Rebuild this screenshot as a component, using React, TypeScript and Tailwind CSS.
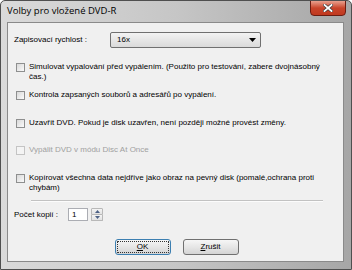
import React from "react";

const body = { fontFamily: '"Liberation Sans", Arial, sans-serif' };

function Check({ disabled }: { disabled?: boolean }) {
  return (
    <div
      className={
        "w-[9px] h-[9px] shrink-0 border " +
        (disabled
          ? "border-[#c4c4c4] bg-[#f4f4f4]"
          : "border-[#8e8f8f] bg-gradient-to-br from-[#d8d8d8] to-[#fbfbfb]")
      }
    />
  );
}

function Btn({ children, def }: { children: React.ReactNode; def?: boolean }) {
  return (
    <div
      className={
        "w-[56px] h-[16px] rounded-[3px] border flex items-center justify-center bg-gradient-to-b from-[#f6f6f6] via-[#e6e6e6] to-[#d4d4d4] " +
        (def ? "border-[#3c7fb1] p-[1px]" : "border-[#707070]")
      }
    >
      {def ? (
        <div className="w-full h-full border border-dotted border-[#333] rounded-[1px] flex items-center justify-center text-[8px] text-black">
          {children}
        </div>
      ) : (
        <span className="text-[8px] text-black">{children}</span>
      )}
    </div>
  );
}

export default function App() {
  return (
    <div
      className="w-[352px] h-[270px] flex flex-col border border-[#4f4f4f] rounded-t-[5px] bg-gradient-to-r from-[#dadada] via-[#c6c6c6] to-[#a6a6a6] overflow-hidden"
      style={body}
    >
      {/* title bar */}
      <div className="h-[21px] shrink-0 flex items-start justify-between pl-[6px] pr-[5px]">
        <span
          className="text-[9.5px] text-black mt-[4px] leading-[12px]"
          style={{ fontFamily: '"Open Sans", "Noto Sans", sans-serif' }}
        >
          Volby pro vložené DVD-R
        </span>
        <div className="w-[36px] h-[16px] -mt-[1px] rounded-b-[4px] border border-[#6b1d12] bg-gradient-to-b from-[#e8a08e] via-[#c8442a] to-[#c0391f] flex items-center justify-center">
          <svg width="10" height="8" viewBox="0 0 10 8">
            <path d="M1.5 1 L8.5 7 M8.5 1 L1.5 7" stroke="#3a3a3a" strokeWidth="3.2" strokeLinecap="square" />
            <path d="M1.5 1 L8.5 7 M8.5 1 L1.5 7" stroke="#ffffff" strokeWidth="1.8" strokeLinecap="square" />
          </svg>
        </div>
      </div>

      {/* client */}
      <div className="flex-1 ml-[6px] mr-[7px] mb-[7px] border border-[#8a8a8a] bg-[#f0f0f0] flex flex-col pt-[9px] text-[8px] text-black leading-[10px]">
        {/* speed row */}
        <div className="h-[16px] flex items-center pl-[6px]">
          <span className="w-[96px]">Zapisovací rychlost :</span>
          <div className="w-[151px] h-[16px] rounded-[2px] border border-[#707070] bg-gradient-to-b from-[#f3f3f3] to-[#dadada] flex items-center justify-between pl-[6px] pr-[4px]">
            <span>16x</span>
            <svg width="7" height="4" viewBox="0 0 7 4">
              <polygon points="0,0 7,0 3.5,4" fill="#000" />
            </svg>
          </div>
        </div>

        {/* row 1 */}
        <div className="mt-[14px] flex items-start pl-[8px] gap-[4px]">
          <div className="mt-[0.5px]"><Check /></div>
          <span className="w-[310px]">
            Simulovat vypalování před vypálením. (Použito pro testování, zabere dvojnásobný čas.)
          </span>
        </div>

        {/* row 2 */}
        <div className="mt-[8px] flex items-start pl-[8px] gap-[4px]">
          <div className="mt-[0.5px]"><Check /></div>
          <span>Kontrola zapsaných souborů a adresářů po vypálení.</span>
        </div>

        {/* row 3 */}
        <div className="mt-[18px] flex items-start pl-[8px] gap-[4px]">
          <div className="mt-[0.5px]"><Check /></div>
          <span>Uzavřít DVD. Pokud je disk uzavřen, není později možné provést změny.</span>
        </div>

        {/* row 4 */}
        <div className="mt-[17px] flex items-start pl-[8px] gap-[4px]">
          <div className="mt-[0.5px]"><Check disabled /></div>
          <span className="text-[#a0a0a0]">Vypálit DVD v módu Disc At Once</span>
        </div>

        {/* row 5 */}
        <div className="mt-[18px] flex items-start pl-[8px] gap-[4px]">
          <div className="mt-[0.5px]"><Check /></div>
          <span className="w-[310px]">
            Kopírovat všechna data nejdříve jako obraz na pevný disk (pomalé,ochrana proti chybám)
          </span>
        </div>

        {/* separator */}
        <div className="mt-[7px] ml-[23px] w-[292px] h-[2px] border-t border-[#c2c2c2] bg-white/80" />

        {/* copies */}
        <div className="mt-[6px] h-[13px] flex items-center pl-[6px]">
          <span className="w-[54px]">Počet kopií :</span>
          <div className="w-[20px] h-[13px] border border-[#abadb3] bg-white flex items-center pl-[3px]">1</div>
          <div className="ml-[3px] w-[12px] h-[13px] flex flex-col">
            <div className="flex-1 border border-[#b8b8b8] rounded-t-[1px] bg-gradient-to-b from-[#f4f4f4] to-[#e2e2e2] flex items-center justify-center">
              <svg width="5" height="3" viewBox="0 0 5 3"><polygon points="2.5,0 5,3 0,3" fill="#4d6185" /></svg>
            </div>
            <div className="flex-1 border border-t-0 border-[#b8b8b8] rounded-b-[1px] bg-gradient-to-b from-[#f4f4f4] to-[#e2e2e2] flex items-center justify-center">
              <svg width="5" height="3" viewBox="0 0 5 3"><polygon points="0,0 5,0 2.5,3" fill="#4d6185" /></svg>
            </div>
          </div>
        </div>

        {/* buttons */}
        <div className="mt-[18px] flex justify-center gap-[12px] pl-[2px]">
          <Btn def>
            <span><span className="underline">O</span>K</span>
          </Btn>
          <Btn>
            <span><span className="underline">Z</span>rušit</span>
          </Btn>
        </div>
      </div>
    </div>
  );
}
